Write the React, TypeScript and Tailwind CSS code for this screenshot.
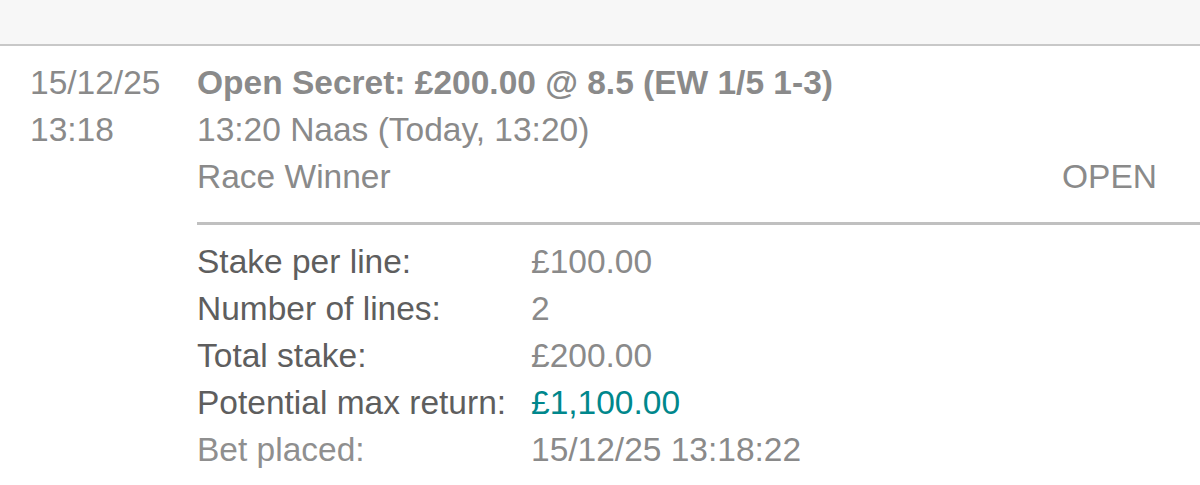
export default function App() {
  const rows: { label: string; value: string; labelCls: string; valueCls: string }[] = [
    { label: "Stake per line:", value: "£100.00", labelCls: "text-[#5e5e5e]", valueCls: "text-[#8a8a8a]" },
    { label: "Number of lines:", value: "2", labelCls: "text-[#5e5e5e]", valueCls: "text-[#8a8a8a]" },
    { label: "Total stake:", value: "£200.00", labelCls: "text-[#5e5e5e]", valueCls: "text-[#8a8a8a]" },
    { label: "Potential max return:", value: "£1,100.00", labelCls: "text-[#5e5e5e]", valueCls: "text-[#00878c]" },
    { label: "Bet placed:", value: "15/12/25 13:18:22", labelCls: "text-[#8f8f8f]", valueCls: "text-[#8a8a8a]" },
  ];
  return (
    <div className="w-[1200px] h-[485px] bg-white overflow-hidden font-['Liberation_Sans',Arial,sans-serif] text-[33.5px] leading-[47px]">
      <div className="h-[44px] bg-[#f7f7f7] border-b-2 border-[#c8c8c8] box-content" />
      <div className="flex pt-[13px]">
        <div className="w-[197px] pl-[30px] text-[#8a8a8a] shrink-0">
          <div>15/12/25</div>
          <div>13:18</div>
        </div>
        <div className="flex-1">
          <div className="pr-[43px] text-[#8a8a8a]">
            <div className="font-bold">Open Secret: £200.00 @ 8.5 (EW 1/5 1-3)</div>
            <div>13:20 Naas (Today, 13:20)</div>
            <div className="flex justify-between">
              <span>Race Winner</span>
              <span>OPEN</span>
            </div>
          </div>
          <div className="mt-[22px] h-[3px] bg-[#c0c0c0]" />
          <div className="pt-[13px]">
            {rows.map((r) => (
              <div key={r.label} className="flex">
                <div className={`w-[334px] shrink-0 ${r.labelCls}`}>{r.label}</div>
                <div className={r.valueCls}>{r.value}</div>
              </div>
            ))}
          </div>
        </div>
      </div>
    </div>
  );
}
